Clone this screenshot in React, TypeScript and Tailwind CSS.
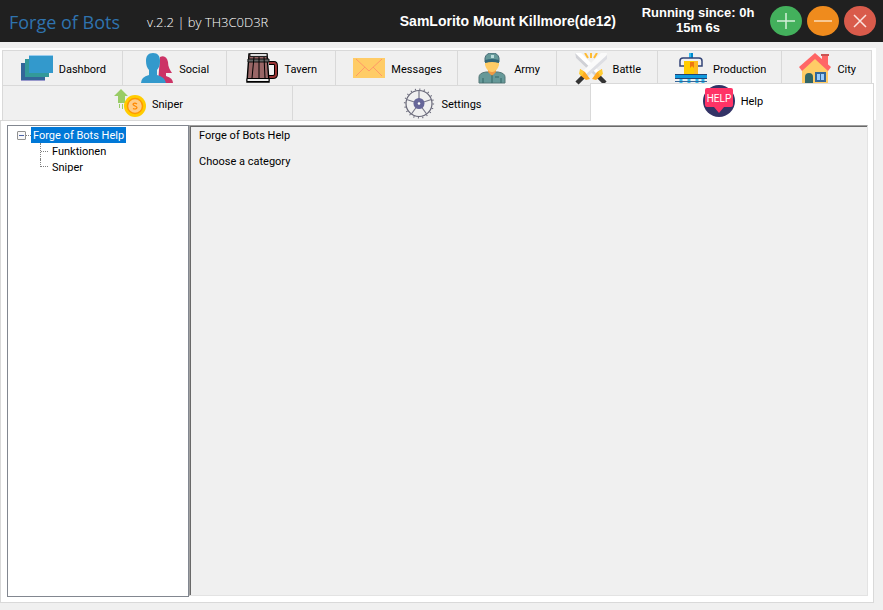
import React, { useState } from 'react';

const label = "font-['Roboto','Liberation_Sans',sans-serif] text-[11px] leading-4";

function DashboardIcon() {
  return (
    <svg width="32" height="32" viewBox="0 0 32 32" aria-hidden="true">
      <path d="M0 10h24v18H0z" fill="#336699" />
      <path d="M0 27h24v1H0z" fill="#9999cc" />
      <path d="M4 6h24v18H4z" fill="#339999" />
      <path d="M8 2h24v18H8z" fill="#3399cc" />
      <path d="M8 2h24v1H8z" fill="#99ccee" />
    </svg>
  );
}

function SocialIcon() {
  return (
    <svg width="32" height="32" viewBox="0 0 32 32" aria-hidden="true">
      <path d="M19 4c4-2 7 0 8 5 0 5 2 8 4 11h-6v3q7 2 7 7H17z" fill="#cc3366" />
      <path d="M12 0c5 0 7 3 7 8 0 4-1 7-3 9v5q8 2 9 8H0q0-6 8-8v-5c-2-2-3-5-3-9 0-5 2-8 7-8z" fill="#3399cc" />
    </svg>
  );
}

function TavernIcon() {
  return (
    <svg width="32" height="32" viewBox="0 0 32 32" aria-hidden="true">
      <path d="M23 10h5q2 0 2 3v8q0 3-3 3h-4" fill="none" stroke="#000" strokeWidth="4" />
      <path d="M23 10h5q2 0 2 3v8q0 3-3 3h-4" fill="none" stroke="#993333" strokeWidth="2" />
      <path d="M3 1h18l2 28H1z" fill="#996666" stroke="#000" strokeWidth="1.4" />
      <path d="M4 0.500h17v3H4z" fill="#ddd" stroke="#222" />
      <path d="M2 6h21v3H2z" fill="#666" stroke="#111" />
      <path d="M1 25.500h22v3H1z" fill="#eee" stroke="#000" />
      <path d="M8 4L6 25M13 4v21M18 4l1 21" stroke="#000" fill="none" />
    </svg>
  );
}

function MessagesIcon() {
  return (
    <svg width="32" height="32" viewBox="0 0 32 32" aria-hidden="true">
      <path d="M0 5h32v20H0z" fill="#ffcc66" />
      <path d="M3 6l13 12L29 6M3 23l9-9M29 23l-9-9" stroke="#ff9966" fill="none" />
    </svg>
  );
}

function ArmyIcon() {
  return (
    <svg width="32" height="32" viewBox="0 0 32 32" aria-hidden="true">
      <path d="M3 30v-6q0-4 7-5h12q7 1 7 5v6z" fill="#669999" stroke="#557777" />
      <path d="M12 15h8v4l-4 4-4-4z" fill="#ee9944" />
      <path d="M9 9h14v3q-2 7-7 7t-7-7z" fill="#ffcc66" />
      <path d="M9 9V5q1-5 7-5t7 5v4q-7-2-14 0z" fill="#669999" stroke="#446b77" />
      <path d="M9 7q7-2 14 0v3q-7-2-14 0z" fill="#336677" />
      <path d="M15 2h3v3h-3z" fill="#bbdddd" />
      <path d="M16 22v8M7 25v5M25 25v5M19 24h4" stroke="#336666" fill="none" />
    </svg>
  );
}

function BattleIcon() {
  return (
    <svg width="32" height="32" viewBox="0 0 32 32" aria-hidden="true">
      <path d="M10 0l3 5M16 0v5M22 0l-3 5" stroke="#ffbb33" strokeWidth="2" />
      <path d="M0 0h6l19 19-5 4L1 5z" fill="#fff" />
      <path d="M0 0l22 21-2 2L1 5z" fill="#d0d1d6" />
      <path d="M32 0h-6L7 19l5 4L31 5z" fill="#fafafa" />
      <path d="M32 2L10 22l2 2L32 6z" fill="#dddee3" />
      <path d="M9 23l-7 7M23 23l7 7" stroke="#333" strokeWidth="4.500" />
      <path d="M5 16l5 3 5 7-4 1-6-5zM27 16l-5 3-5 7 4 1 6-5z" fill="#ffaa22" />
      <path d="M5 16l4 3-2 4-3-2zM27 16l-4 3 2 4 3-2z" fill="#ffcc33" />
    </svg>
  );
}

function ProductionIcon() {
  return (
    <svg width="32" height="32" viewBox="0 0 32 32" aria-hidden="true">
      <path d="M14 0h4v5h-4z" fill="#33bbee" />
      <path d="M16 0h2v5h-2z" fill="#0088cc" />
      <path d="M9 13H5V8q0-3 3-3h16q3 0 3 3v5h-4" stroke="#334477" strokeWidth="1.5" fill="none" />
      <path d="M9 8h14v13H9z" fill="#ffcc00" />
      <path d="M19 8h4v13h-4z" fill="#ffbb22" />
      <path d="M15 9h4v6l-2-2-2 2z" fill="#ee7711" />
      <path d="M0 21h32v5H0z" fill="#1199dd" />
      <path d="M0 21.500h32M0 25.500h32" stroke="#224477" />
      <path d="M6 26v6M14 26v6M22 26v6M28 26v6" stroke="#33bbee" strokeWidth="3" />
      <path d="M0 28.500h32" stroke="#336699" />
    </svg>
  );
}

function CityIcon() {
  return (
    <svg width="32" height="32" viewBox="0 0 32 32" aria-hidden="true">
      <path d="M23 1h6v14h-6z" fill="#ff6666" />
      <path d="M22 1h8v2h-8z" fill="#cc5555" />
      <path d="M3 15L16 3l13 12v17H3z" fill="#ffcc66" />
      <path d="M16 0L0 14l3 4L16 6l13 12 3-4z" fill="#ff6666" />
      <path d="M6 32V24q0-4 4-4t4 4v8z" fill="#336666" />
      <path d="M16 19h11v10H16z" fill="#336699" />
      <path d="M18 21h3v6h-3zM22 21h3v6h-3z" fill="#99ccff" />
    </svg>
  );
}

function SniperIcon() {
  return (
    <svg width="32" height="32" viewBox="0 0 32 32" aria-hidden="true">
      <path d="M7 1l7 7h-3v7H4V8H0z" fill="#99cc66" />
      <path d="M5.500 16v4M8.500 16v5" stroke="#99cc66" />
      <circle cx="21" cy="18" r="11" fill="#ffcc00" />
      <circle cx="21" cy="18" r="7.500" fill="#ffcc88" stroke="#ff9900" strokeWidth="1.500" />
      <path d="M23 16q-2-1.500-3.500-.5t1.500 2.500 1.500 2.500-3.500 0" stroke="#ff8800" fill="none" strokeWidth="1.200" />
    </svg>
  );
}

function SettingsIcon() {
  return (
    <svg width="32" height="32" viewBox="0 0 32 32" aria-hidden="true">
      <circle cx="16" cy="15.500" r="13" fill="none" stroke="#666677" strokeWidth="1.200" />
      <circle cx="16" cy="15.500" r="14.300" fill="none" stroke="#666677" strokeWidth="1.600" strokeDasharray="1 3.490" />
      <path d="M16 15.500V2.500M16 15.500L3.600 11.500M16 15.500l12.400-4M16 15.500L8.400 26M16 15.500l7.600 10.500" stroke="#777788" strokeWidth="1.200" />
      <circle cx="16" cy="15.500" r="5.500" fill="#666699" />
      <circle cx="16" cy="15.500" r="1.300" fill="#fff" />
    </svg>
  );
}

function HelpIcon() {
  return (
    <svg width="32" height="32" viewBox="0 0 32 32" aria-hidden="true">
      <circle cx="16" cy="16" r="16" fill="#333366" />
      <path d="M4 3h24q2 0 2 2v15q0 2-2 2h-7l-5 6-5-6H4q-2 0-2-2V5q0-2 2-2z" fill="#ff3366" />
      <text x="16" y="17" textAnchor="middle" fill="#fff" fontFamily="Roboto, sans-serif" fontSize="10">HELP</text>
    </svg>
  );
}

type TabInfo = { name: string; grow: string; icon: () => React.JSX.Element };

const topTabs: TabInfo[] = [
  { name: 'Dashbord', grow: 'flex-[120]', icon: DashboardIcon },
  { name: 'Social', grow: 'flex-[104]', icon: SocialIcon },
  { name: 'Tavern', grow: 'flex-[109]', icon: TavernIcon },
  { name: 'Messages', grow: 'flex-[123]', icon: MessagesIcon },
  { name: 'Army', grow: 'flex-[98]', icon: ArmyIcon },
  { name: 'Battle', grow: 'flex-[101]', icon: BattleIcon },
  { name: 'Production', grow: 'flex-[125]', icon: ProductionIcon },
  { name: 'City', grow: 'flex-[89]', icon: CityIcon },
];

const bottomTabs: TabInfo[] = [
  { name: 'Sniper', grow: 'flex-[290]', icon: SniperIcon },
  { name: 'Settings', grow: 'flex-[298]', icon: SettingsIcon },
  { name: 'Help', grow: 'flex-[283]', icon: HelpIcon },
];

function Tab({ tab, selected, onSelect }: { tab: TabInfo; selected: boolean; onSelect: () => void }) {
  const Icon = tab.icon;
  const look = selected
    ? 'relative -mt-0.5 -mr-0.5 h-[38px] border border-b-0 border-[#d9d9d9] bg-white pb-px'
    : 'h-[35px] border-t border-l border-[#d9d9d9] bg-[#f0f0f0] pt-[3px]';
  return (
    <button
      type="button"
      role="tab"
      aria-selected={selected}
      onClick={onSelect}
      className={`${tab.grow} ${look} ${label} flex min-w-0 items-center justify-center gap-1.5 overflow-hidden pl-0.5 text-black`}
    >
      <span className="shrink-0 pb-0.5"><Icon /></span>
      <span>{tab.name}</span>
    </button>
  );
}

export default function App() {
  const [active, setActive] = useState('Help');
  return (
    <div className="flex min-h-screen flex-col bg-[#f0f0f0] text-black">
      <header className="flex h-[42px] shrink-0 items-center bg-[#202020] pr-[7px] pl-[9px] text-white">
        <h1 className="w-[138px] shrink-0 pt-0.5 font-['Open_Sans',sans-serif] text-[18px] leading-6 font-normal text-[#2f73ae]">Forge of Bots</h1>
        <p className="pt-0.5 font-['Open_Sans',sans-serif] text-[13px] leading-5 font-light">v.2.2 | by TH3C0D3R</p>
        <div className="ml-auto flex items-center font-['Liberation_Sans',Arial,sans-serif] leading-[15px] font-bold">
          <p className="text-[14px] whitespace-nowrap">SamLorito Mount Killmore(de12)</p>
          <p className="mr-1.5 ml-4 w-[132px] pb-0.5 text-center text-[13px]">Running since: 0h<br />15m 6s</p>
        </div>
        <div className="flex gap-[5px]">
          <button type="button" aria-label="Maximize" className="h-8 w-8">
            <svg width="32" height="32" viewBox="0 0 32 32"><ellipse cx="16" cy="16" rx="16" ry="15" fill="#43b05c" /><path d="M7 16h18M16 8v16" stroke="#d4efd9" strokeWidth="1.500" /></svg>
          </button>
          <button type="button" aria-label="Minimize" className="h-8 w-8">
            <svg width="32" height="32" viewBox="0 0 32 32"><ellipse cx="16" cy="16" rx="16" ry="15" fill="#ef8b1d" /><path d="M7 16h18" stroke="#fbdcba" strokeWidth="1.500" /></svg>
          </button>
          <button type="button" aria-label="Close" className="h-8 w-8">
            <svg width="32" height="32" viewBox="0 0 32 32"><ellipse cx="16" cy="16" rx="16" ry="15" fill="#d95b4b" /><path d="M10 10l12 12M22 10L10 22" stroke="#fbe3df" strokeWidth="1.500" /></svg>
          </button>
        </div>
      </header>

      <nav role="tablist" aria-label="Sections" className="mt-1.5 mr-[7px] bg-white pt-0.5 pr-1 pl-0.5">
        <div className="flex border-r border-[#d9d9d9]">
          {topTabs.map((t) => (
            <Tab key={t.name} tab={t} selected={active === t.name} onSelect={() => setActive(t.name)} />
          ))}
        </div>
        <div className="flex h-[35px]">
          {bottomTabs.map((t) => (
            <Tab key={t.name} tab={t} selected={active === t.name} onSelect={() => setActive(t.name)} />
          ))}
        </div>
      </nav>

      <main className="mr-[9px] mb-[7px] flex flex-1 border border-[#d9d9d9] bg-white pt-1 pr-[5px] pb-[5px] pl-1.5">
        <aside className={`${label} w-[182px] shrink-0 border border-[#828790] bg-white pt-px pl-[9px]`}>
          <div className="flex h-4 items-center">
            <button type="button" aria-label="Collapse" className="flex h-[9px] w-[9px] items-center justify-center rounded-[1px] border border-[#919191] bg-[#f8f8f8]">
              <span className="h-px w-[5px] bg-[#4b63a7]" />
            </button>
            <span className="w-[5px] border-t border-dotted border-[#808080]" />
            <a href="#help" className="h-4 bg-[#0078d7] px-0.5 pt-px leading-[15px] text-white">Forge of Bots Help</a>
          </div>
          <ul className="ml-[23px]">
            <li className="flex h-4">
              <span className="flex w-2 items-center border-l border-dotted border-[#808080]"><span className="w-full border-t border-dotted border-[#808080]" /></span>
              <a href="#funktionen" className="ml-1 pt-px">Funktionen</a>
            </li>
            <li className="flex h-4">
              <span className="h-2 w-2 border-b border-l border-dotted border-[#808080]" />
              <a href="#sniper" className="ml-1 pt-px">Sniper</a>
            </li>
          </ul>
        </aside>
        <section className={`${label} mb-px flex flex-1 border border-t-[#a0a0a0] border-r-[#e3e3e3] border-b-[#e3e3e3] border-l-[#a0a0a0] bg-[#f0f0f0]`}>
          <div className="flex-1 border-t border-l border-[#696969] pt-px pl-2">
            <h2>Forge of Bots Help</h2>
            <p className="mt-2.5">Choose a category</p>
          </div>
        </section>
      </main>
    </div>
  );
}
